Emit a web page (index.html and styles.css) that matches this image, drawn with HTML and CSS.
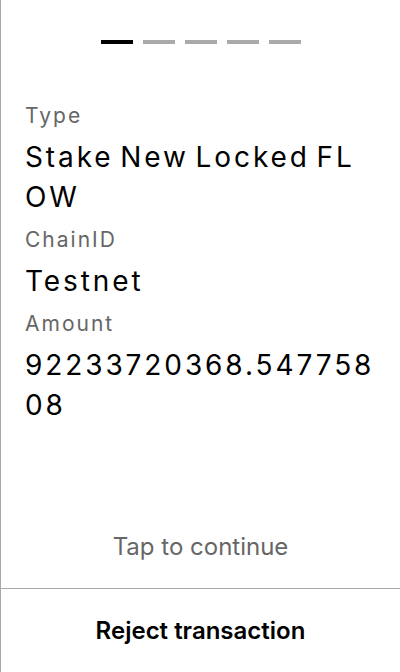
FILE: index.html
```html
<!DOCTYPE html>
<html>
<head>
<meta charset="utf-8">
<link rel="stylesheet" href="styles.css">
</head>
<body>
<div class="screen">
  <div class="main">
    <div class="steps">
      <span class="step active"></span>
      <span class="step"></span>
      <span class="step"></span>
      <span class="step"></span>
      <span class="step"></span>
    </div>
    <div class="fields">
      <div class="label">Type</div>
      <div class="value">Stake New Locked FLOW</div>
      <div class="label">ChainID</div>
      <div class="value">Testnet</div>
      <div class="label">Amount</div>
      <div class="value">92233720368.54775808</div>
    </div>
    <div class="tap">Tap to continue</div>
  </div>
  <div class="reject">Reject transaction</div>
</div>
</body>
</html>
```
FILE: styles.css
```css
html, body {
  margin: 0;
  padding: 0;
  background: #fff;
}
.screen {
  width: 400px;
  height: 672px;
  box-sizing: border-box;
  border-left: 1px solid #aaaaaa;
  display: flex;
  flex-direction: column;
  font-family: Inter, "Noto Sans", sans-serif;
  color: #000;
}
.main {
  flex: 1;
  display: flex;
  flex-direction: column;
  padding: 40px 24px 0 24px;
  border-bottom: 1px solid #aaaaaa;
}
.steps {
  display: flex;
  justify-content: center;
  gap: 10px;
}
.step {
  width: 32px;
  height: 4px;
  background: #aaaaaa;
}
.step.active {
  background: #000;
}
.fields {
  margin-top: 58px;
  flex: 1;
}
.label {
  font-size: 21px;
  line-height: 28px;
  letter-spacing: 2px;
  color: #666666;
  margin-top: 9px;
}
.label:first-child {
  margin-top: 0;
}
.value {
  font-size: 28px;
  line-height: 40px;
  letter-spacing: 2.9px;
  word-spacing: -4px;
  word-break: break-all;
  margin-top: 7px;
}
.tap {
  text-align: center;
  font-size: 24px;
  line-height: 32px;
  color: #666666;
  padding-bottom: 25px;
}
.reject {
  height: 83px;
  display: flex;
  align-items: center;
  justify-content: center;
  font-size: 24px;
  font-weight: 600;
}
```
